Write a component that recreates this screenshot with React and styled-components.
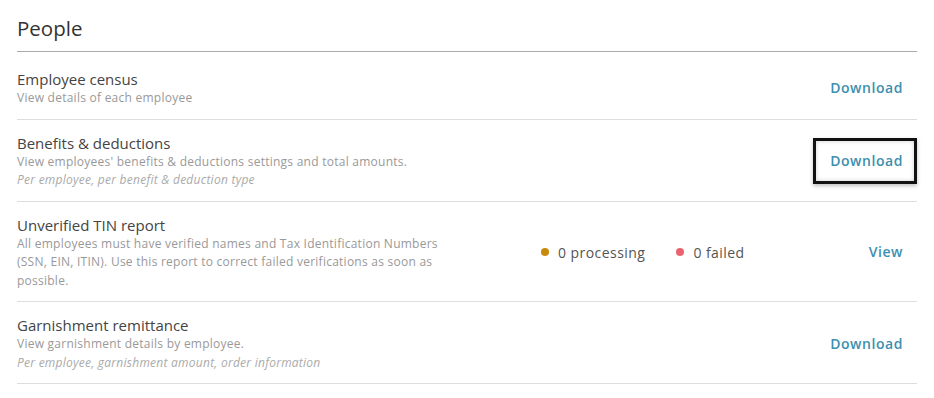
import React from "react";
import styled, { createGlobalStyle } from "styled-components";

const GlobalStyle = createGlobalStyle`
  body {
    margin: 0;
    background: #ffffff;
    font-family: "Open Sans", "Liberation Sans", sans-serif;
  }
`;

const Page = styled.div`
  padding: 14px 17px 0 17px;
`;

const Heading = styled.h2`
  margin: 0 0 4px 0;
  padding-bottom: 9px;
  font-size: 20.5px;
  line-height: 28px;
  font-weight: 400;
  color: #333;
  border-bottom: 1px solid #aaaaaa;
`;

const Row = styled.div`
  display: grid;
  grid-template-columns: 520px 1fr auto;
  align-items: center;
  padding: 13px 0 11px 0;
  border-bottom: 1px solid #dddddd;
`;

const Info = styled.div`
  max-width: 440px;
`;

const Title = styled.div`
  font-size: 15px;
  line-height: 20px;
  color: #444;
`;

const Desc = styled.div`
  font-size: 12px;
  line-height: 18.5px;
  letter-spacing: 0.25px;
  font-style: ${(p) => (p.$italic ? "italic" : "normal")};
  color: ${(p) => (p.$italic ? "#aaa" : "#999")};
`;

const Status = styled.div`
  display: flex;
  align-items: center;
  gap: 31px;
  padding-left: 4px;
`;

const StatusItem = styled.span`
  display: flex;
  align-items: center;
  gap: 9px;
  font-size: 14px;
  letter-spacing: 0.45px;
  color: #555;
`;

const Dot = styled.span`
  width: 8px;
  height: 8px;
  border-radius: 50%;
  background: ${(p) => p.$color};
`;

const Action = styled.button`
  justify-self: end;
  grid-column: 3;
  margin: -6px 0;
  background: #fff;
  border: 3px solid ${(p) => (p.$focused ? "#111" : "transparent")};
  box-shadow: ${(p) =>
    p.$focused ? "0 2px 4px rgba(0,0,0,0.25), inset 0 0 4px rgba(0,0,0,0.2)" : "none"};
  padding: 11px 11px 11px 14px;
  font-family: "Open Sans", "Liberation Sans", sans-serif;
  font-size: 14px;
  line-height: 18px;
  font-weight: 600;
  letter-spacing: 0.55px;
  color: #3d8fae;
  cursor: pointer;
`;

const reports = [
  {
    title: "Employee census",
    desc: ["View details of each employee"],
    action: "Download",
  },
  {
    title: "Benefits & deductions",
    desc: ["View employees' benefits & deductions settings and total amounts."],
    note: "Per employee, per benefit & deduction type",
    action: "Download",
    focused: true,
  },
  {
    title: "Unverified TIN report",
    desc: [
      "All employees must have verified names and Tax Identification Numbers (SSN, EIN, ITIN). Use this report to correct failed verifications as soon as possible.",
    ],
    status: true,
    action: "View",
  },
  {
    title: "Garnishment remittance",
    desc: ["View garnishment details by employee."],
    note: "Per employee, garnishment amount, order information",
    action: "Download",
  },
];

export default function App() {
  return (
    <>
      <GlobalStyle />
      <Page>
        <Heading>People</Heading>
        {reports.map((r) => (
          <Row key={r.title}>
            <Info>
              <Title>{r.title}</Title>
              {r.desc.map((d) => (
                <Desc key={d}>{d}</Desc>
              ))}
              {r.note && <Desc $italic>{r.note}</Desc>}
            </Info>
            {r.status && (
              <Status>
                <StatusItem>
                  <Dot $color="#c98a0b" />0 processing
                </StatusItem>
                <StatusItem>
                  <Dot $color="#e8636f" />0 failed
                </StatusItem>
              </Status>
            )}
            <Action $focused={r.focused}>{r.action}</Action>
          </Row>
        ))}
      </Page>
    </>
  );
}
